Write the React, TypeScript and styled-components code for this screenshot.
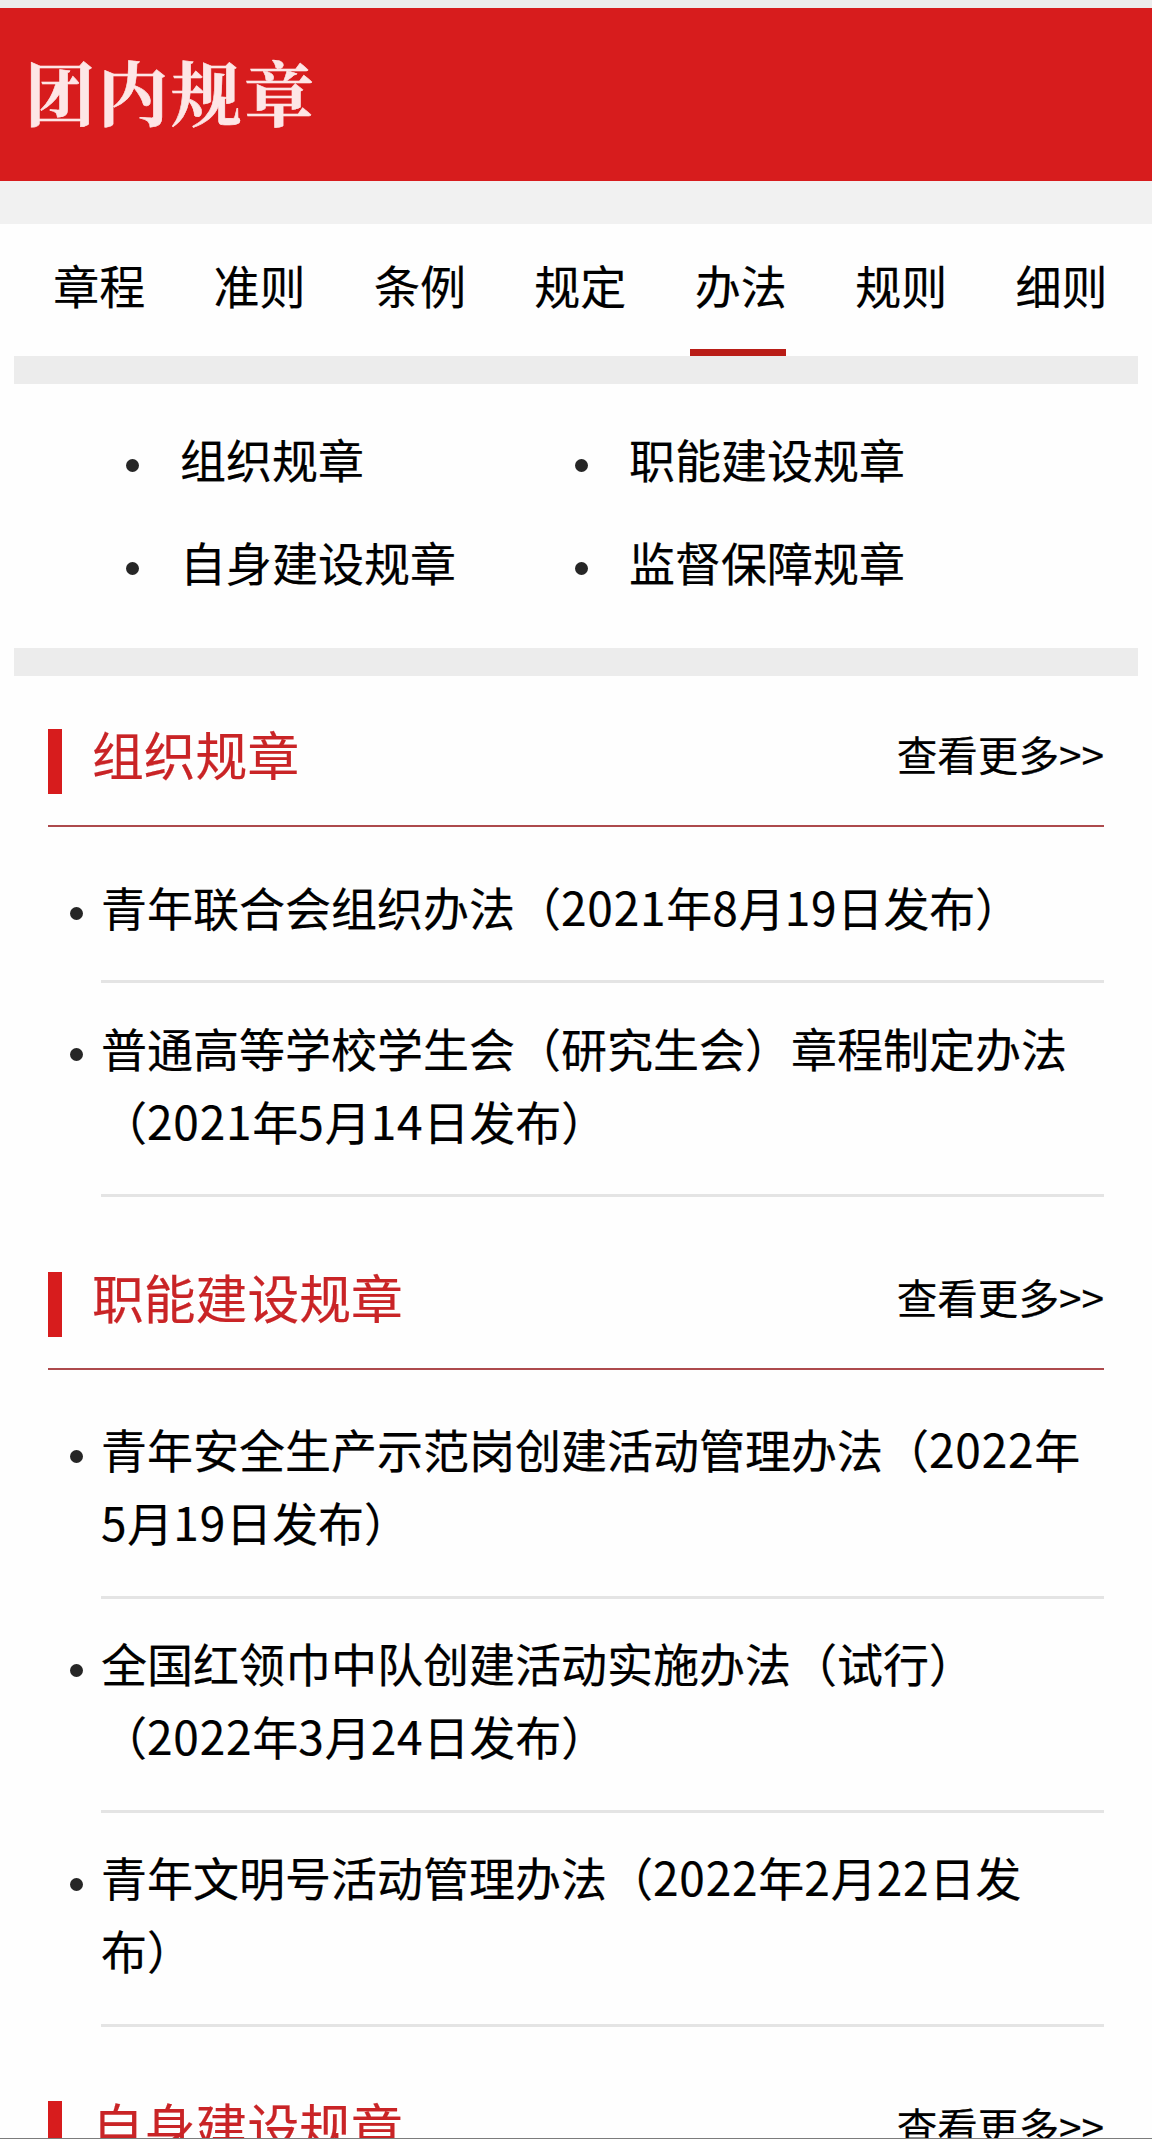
import React from 'react';
import styled, { createGlobalStyle } from 'styled-components';

const GlobalStyle = createGlobalStyle`
  * { box-sizing: border-box; }
  body {
    margin: 0;
    background: #fefefe;
    color: #000;
    font-family: "Noto Sans CJK SC", "Noto Sans", sans-serif;
    text-spacing-trim: space-all;
    -webkit-text-stroke: 0.2px currentColor;
  }
  ul { list-style: none; margin: 0; padding: 0; }
`;

const Page = styled.div`
  width: 1152px;
  height: 2139px;
  overflow: hidden;
  border-top: 8px solid #ececec;
  border-bottom: 1px solid #7c7c7c;
`;

const Header = styled.header`
  display: flex;
  align-items: flex-start;
  height: 173px;
  padding: 33px 0 0 25px;
  background: #d71c1d;
`;

const HeaderTitle = styled.h1`
  margin: 0;
  color: #fde6e6;
  font-family: "Noto Serif CJK SC", "Source Han Serif SC", "Noto Sans CJK SC", serif;
  font-size: 70px;
  font-weight: 700;
  letter-spacing: 3px;
  line-height: 100px;
  -webkit-text-stroke: 0.6px currentColor;
`;

const Spacer = styled.div`
  height: 43px;
  background: #f1f1f1;
`;

const Tabs = styled.nav`
  display: flex;
  height: 132px;
  padding-left: 19px;
`;

const Tab = styled.a<{ $active?: boolean }>`
  display: flex;
  flex: 0 0 160.4px;
  flex-direction: column;
  align-items: center;
  justify-content: space-between;
  padding-top: 24px;
  font-size: 46px;
  line-height: 73px;

  &::after {
    content: "";
    width: 96px;
    height: 7px;
    margin-right: 5px;
    background: ${({ $active }) => ($active ? '#b91d17' : 'transparent')};
  }
`;

const Band = styled.div`
  height: 28px;
  margin: 0 14px;
  background: #ececec;
`;

const Categories = styled.ul`
  display: grid;
  grid-template-columns: 449px 449px;
  row-gap: 30px;
  height: 264px;
  padding: 38px 0 0 126px !important;
  align-content: start;
`;

const Dot = styled.span<{ $gap: number }>`
  flex: none;
  width: 13px;
  height: 13px;
  margin: 37px ${({ $gap }) => $gap}px 0 0;
  border-radius: 50%;
  background: #262626;
`;

const Category = styled.li`
  display: flex;
  font-size: 46px;
  line-height: 73px;
`;

const Section = styled.section<{ $first?: boolean }>`
  padding: ${({ $first }) => ($first ? 53 : 74.5)}px 48px 0;
`;

const SectionHead = styled.div`
  display: flex;
  justify-content: space-between;
  height: 98px;
  border-bottom: 2px solid #ad4a4c;
`;

const SectionTitle = styled.h2`
  display: flex;
  margin: 0;
  color: #c92426;
  font-size: 51.8px;
  font-weight: 400;
  line-height: 50px;

  &::before {
    content: "";
    width: 14px;
    height: 65px;
    margin-right: 30px;
    background: #d71c1d;
  }
`;

const More = styled.a`
  font-size: 40.6px;
  line-height: 50px;
`;

const List = styled.ul`
  padding: 15px 0 0 22px !important;
`;

const Item = styled.li`
  display: flex;
`;

const ItemDot = styled(Dot)`
  margin-top: 65px;
`;

const ItemBody = styled.div`
  flex: 1;
  padding: 27.5px 0 37.5px;
  border-bottom: 3px solid #e4e4e4;
  font-size: 46px;
  line-height: 73px;
`;

const Line = styled.div`
  white-space: nowrap;
`;

const Digits = styled.span`
  letter-spacing: 0.8px;
`;

const tabs = ['章程', '准则', '条例', '规定', '办法', '规则', '细则'];
const categories = ['组织规章', '职能建设规章', '自身建设规章', '监督保障规章'];
const sections: { title: string; items: string[][] }[] = [
  {
    title: '组织规章',
    items: [
      ['青年联合会组织办法（2021年8月19日发布）'],
      ['普通高等学校学生会（研究生会）章程制定办法', '（2021年5月14日发布）'],
    ],
  },
  {
    title: '职能建设规章',
    items: [
      ['青年安全生产示范岗创建活动管理办法（2022年', '5月19日发布）'],
      ['全国红领巾中队创建活动实施办法（试行）', '（2022年3月24日发布）'],
      ['青年文明号活动管理办法（2022年2月22日发', '布）'],
    ],
  },
  { title: '自身建设规章', items: [] },
];

function TextLine({ text }: { text: string }) {
  return (
    <Line>
      {text.split(/(\d+)/).map((part, i) =>
        /^\d/.test(part) ? <Digits key={i}>{part}</Digits> : part,
      )}
    </Line>
  );
}

export default function App() {
  return (
    <Page lang="zh-CN">
      <GlobalStyle />
      <Header>
        <HeaderTitle>团内规章</HeaderTitle>
      </Header>
      <Spacer />
      <Tabs>
        {tabs.map((t) => (
          <Tab key={t} $active={t === '办法'}>
            {t}
          </Tab>
        ))}
      </Tabs>
      <Band />
      <Categories>
        {categories.map((c) => (
          <Category key={c}>
            <Dot $gap={41} />
            {c}
          </Category>
        ))}
      </Categories>
      <Band />
      {sections.map((s, i) => (
        <Section key={s.title} $first={i === 0}>
          <SectionHead>
            <SectionTitle>{s.title}</SectionTitle>
            <More>查看更多&gt;&gt;</More>
          </SectionHead>
          <List>
            {s.items.map((lines) => (
              <Item key={lines[0]}>
                <ItemDot $gap={18} />
                <ItemBody>
                  {lines.map((l) => (
                    <TextLine key={l} text={l} />
                  ))}
                </ItemBody>
              </Item>
            ))}
          </List>
        </Section>
      ))}
    </Page>
  );
}
